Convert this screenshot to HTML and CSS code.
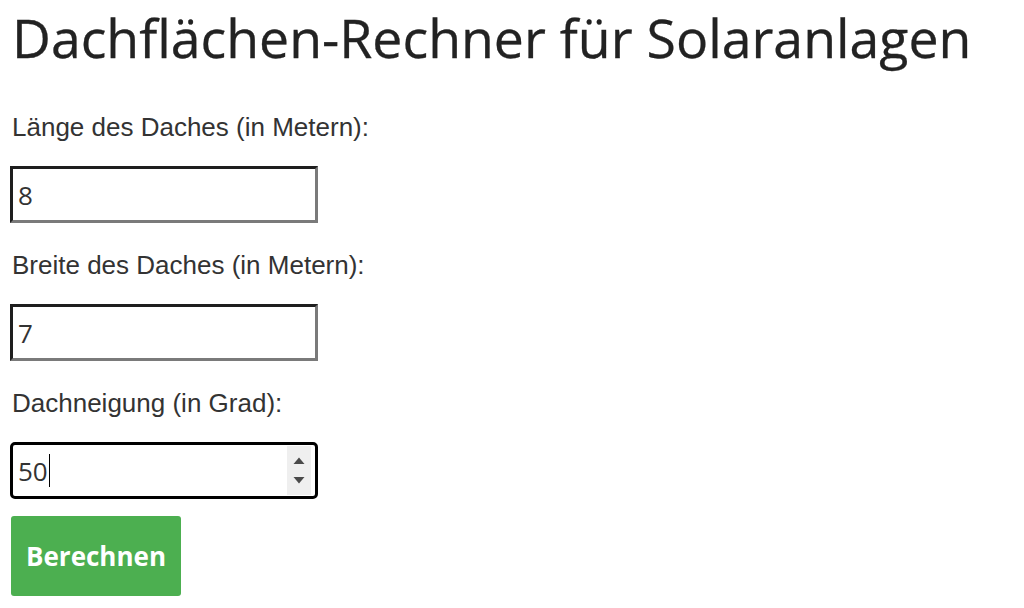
FILE: index.html
```html
<!DOCTYPE html>
<html lang="de">
<head>
<meta charset="utf-8">
<title>Dachflächen-Rechner für Solaranlagen</title>
<link rel="stylesheet" href="styles.css">
</head>
<body>
<h1 class="title">Dachflächen-Rechner für Solaranlagen</h1>
<form class="calc">
  <label class="field-label" for="laenge">Länge des Daches (in Metern):</label>
  <input class="field" id="laenge" type="text" value="8">
  <label class="field-label" for="breite">Breite des Daches (in Metern):</label>
  <input class="field" id="breite" type="text" value="7">
  <label class="field-label" for="neigung">Dachneigung (in Grad):</label>
  <div class="field field-focus" id="neigung">
    <span class="field-value">50</span><span class="caret"></span>
    <span class="spin">
      <svg width="12" height="8" viewBox="0 0 12 8"><path d="M0.5 7 L6 0.5 L11.5 7 Z" fill="#4a4a4a"/></svg>
      <svg width="12" height="8" viewBox="0 0 12 8"><path d="M0.5 1 L6 7.5 L11.5 1 Z" fill="#4a4a4a"/></svg>
    </span>
  </div>
  <button class="btn" type="button">Berechnen</button>
</form>
</body>
</html>
```
FILE: styles.css
```css
html, body {
  margin: 0;
  padding: 0;
  background: #fff;
}
body {
  padding: 0 12px;
  font-family: "Liberation Sans", Arial, sans-serif;
  color: #333;
}
.title {
  font-family: "Open Sans", sans-serif;
  font-weight: 400;
  font-size: 53.6px;
  line-height: 64px;
  color: #222;
  margin: 6px 0 0 0;
  white-space: nowrap;
  -webkit-text-stroke: 0.3px #222;
}
.calc {
  display: flex;
  flex-direction: column;
  align-items: flex-start;
  padding-top: 42px;
}
.field-label {
  font-size: 26px;
  line-height: 30px;
  color: #333;
  margin-bottom: 24px;
}
.field {
  box-sizing: border-box;
  width: 308px;
  height: 57px;
  margin: 0 0 27px -2px;
  padding: 0 0 0 5px;
  border-width: 3px;
  border-style: solid;
  border-top-color: #1e1e1e;
  border-left-color: #1e1e1e;
  border-bottom-color: #7a7a7a;
  border-right-color: #7a7a7a;
  font-family: "Open Sans", sans-serif;
  font-size: 26px;
  color: #333;
  background: #fff;
  outline: none;
}
.field-focus {
  display: flex;
  align-items: center;
  border: 3px solid #000;
  border-radius: 5px;
  padding: 0 4px 0 5px;
  margin-bottom: 17px;
}
.field-value {
  line-height: 1;
}
.caret {
  display: inline-block;
  width: 1.5px;
  height: 33px;
  background: #000;
  margin-left: 1px;
}
.spin {
  margin-left: auto;
  width: 24px;
  height: 49px;
  background: #efefef;
  display: flex;
  flex-direction: column;
  align-items: center;
  justify-content: space-evenly;
}
.btn {
  background: #4caf50;
  color: #fff;
  border: none;
  border-radius: 3px;
  font-family: "Open Sans", sans-serif;
  font-weight: 700;
  font-size: 26px;
  width: 170px;
  height: 80px;
  margin-left: -1px;
  padding: 0;
}
```
